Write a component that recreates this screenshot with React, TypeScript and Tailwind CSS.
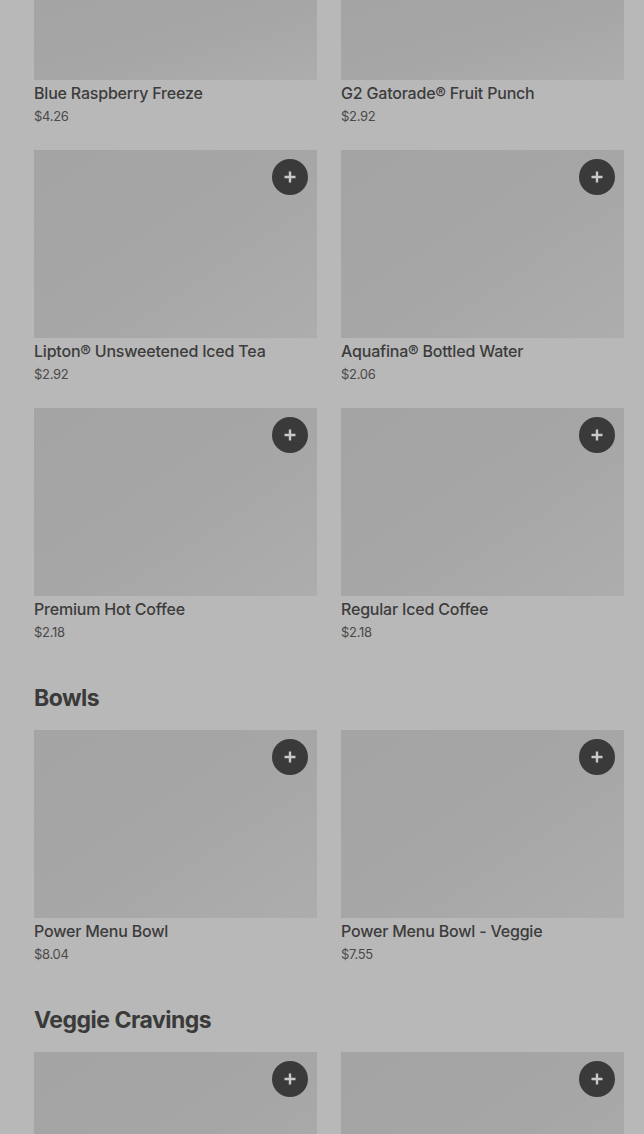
import React from "react";

type Item = { name: string; price: string };

const Plus = () => (
  <svg width="14" height="14" viewBox="0 0 14 14" fill="none">
    <path d="M7 1.5v11M1.5 7h11" stroke="#c9c9c9" strokeWidth="2.4" />
  </svg>
);

function Card({ item, imgH = "h-[188px]", button = true }: { item?: Item; imgH?: string; button?: boolean }) {
  return (
    <div className="flex flex-col">
      <div className={`relative ${imgH} w-full bg-gradient-to-br from-[#a4a4a4] via-[#a6a6a6] to-[#adadad]`}>
        {button && (
          <div className="absolute right-[9px] top-[9px] flex h-9 w-9 items-center justify-center rounded-full bg-[#3a3a3a]">
            <Plus />
          </div>
        )}
      </div>
      {item && (
        <>
          <div className="mt-[2px] text-[16px] font-medium leading-[22px] tracking-[-0.2px] text-[#3c3c3c]">
            {item.name}
          </div>
          <div className="mt-[2px] text-[13px] leading-[20px] tracking-[-0.3px] text-[#4a4a4a]">{item.price}</div>
        </>
      )}
    </div>
  );
}

function Row({ items, imgH, button }: { items: (Item | undefined)[]; imgH?: string; button?: boolean }) {
  return (
    <div className="grid grid-cols-2 gap-x-6">
      {items.map((it, i) => (
        <Card key={i} item={it} imgH={imgH} button={button} />
      ))}
    </div>
  );
}

function Heading({ children }: { children: React.ReactNode }) {
  return (
    <div className="flex h-16 items-center text-[23px] font-bold tracking-[-0.5px] text-[#3a3a3a]">
      {children}
    </div>
  );
}

export default function App() {
  return (
    <div
      className="h-[1134px] w-[644px] overflow-hidden bg-[#b8b8b8] pl-[34px] pr-[20px]"
      style={{ fontFamily: "Inter, 'Noto Sans', sans-serif" }}
    >
      <div className="flex flex-col gap-6">
        <Row
          imgH="h-[80px]"
          button={false}
          items={[
            { name: "Blue Raspberry Freeze", price: "$4.26" },
            { name: "G2 Gatorade® Fruit Punch", price: "$2.92" },
          ]}
        />
        <Row
          items={[
            { name: "Lipton® Unsweetened Iced Tea", price: "$2.92" },
            { name: "Aquafina® Bottled Water", price: "$2.06" },
          ]}
        />
        <Row
          items={[
            { name: "Premium Hot Coffee", price: "$2.18" },
            { name: "Regular Iced Coffee", price: "$2.18" },
          ]}
        />
        <div className="flex flex-col">
          <Heading>Bowls</Heading>
          <Row
            items={[
              { name: "Power Menu Bowl", price: "$8.04" },
              { name: "Power Menu Bowl - Veggie", price: "$7.55" },
            ]}
          />
        </div>
        <div className="flex flex-col">
          <Heading>Veggie Cravings</Heading>
          <Row items={[undefined, undefined]} />
        </div>
      </div>
    </div>
  );
}
